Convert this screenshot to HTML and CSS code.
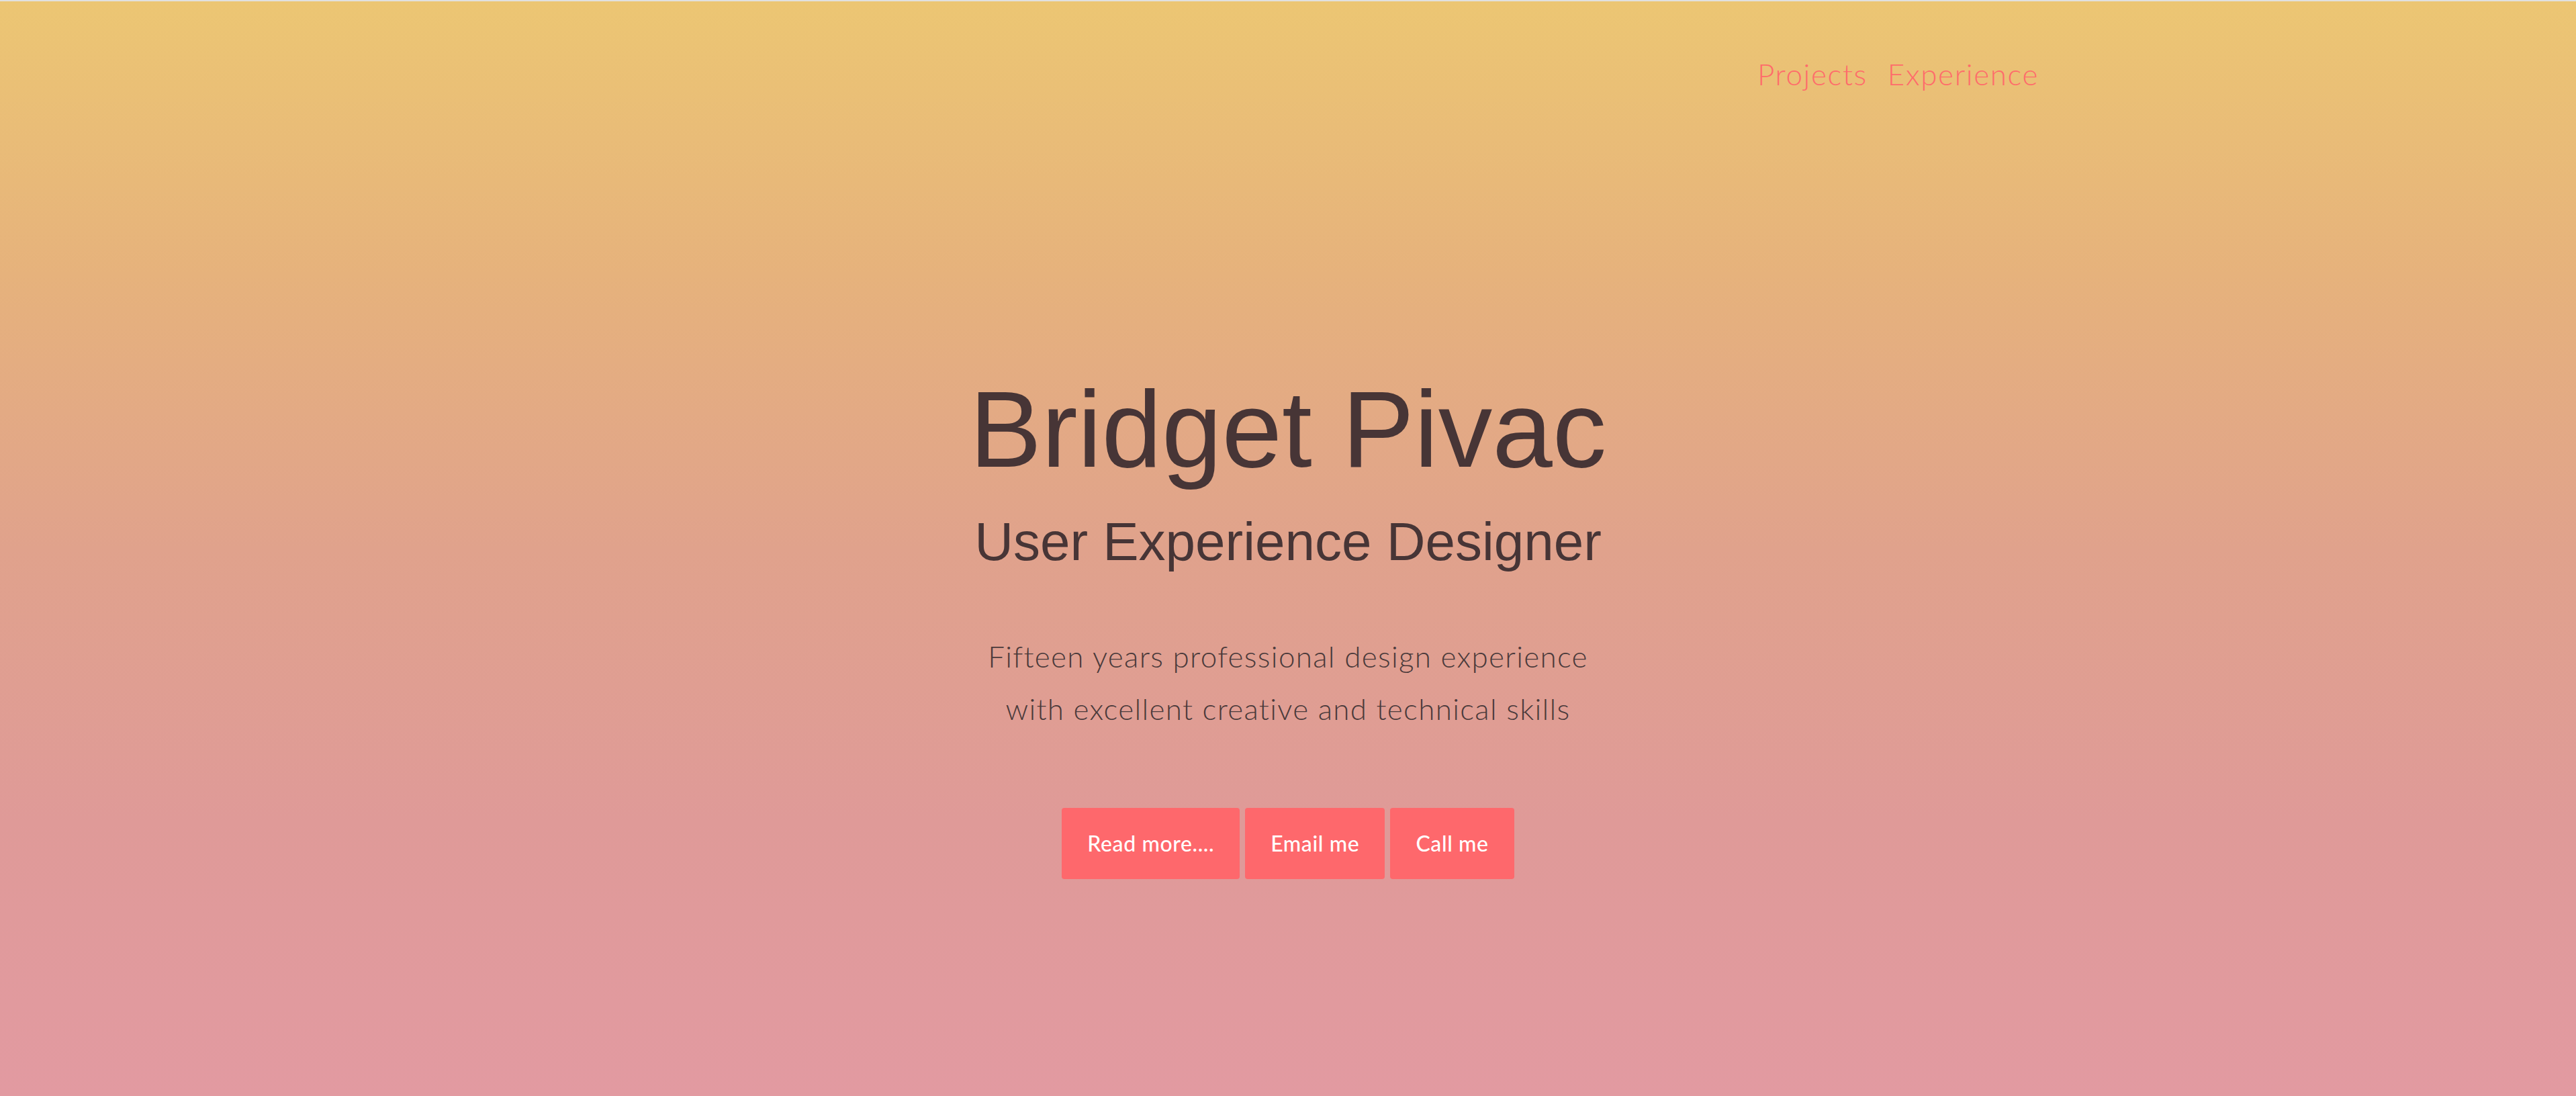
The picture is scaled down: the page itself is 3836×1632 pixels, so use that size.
FILE: index.html
```html
<!DOCTYPE html>
<html lang="en">
<head>
<meta charset="utf-8">
<title>Bridget Pivac</title>
<link rel="stylesheet" href="styles.css">
</head>
<body>
<div class="page">
  <header class="topbar">
    <nav class="nav">
      <a class="nav-link" href="#projects">Projects</a>
      <a class="nav-link" href="#experience">Experience</a>
    </nav>
  </header>
  <main class="hero">
    <h1 class="name">Bridget Pivac</h1>
    <h2 class="role">User Experience Designer</h2>
    <p class="intro">Fifteen years professional design experience<br>with excellent creative and technical skills</p>
    <div class="actions">
      <a class="btn btn-read" href="#more">Read more....</a>
      <a class="btn btn-email" href="#email">Email me</a>
      <a class="btn btn-call" href="#call">Call me</a>
    </div>
  </main>
</div>
</body>
</html>
```
FILE: styles.css
```css
html, body {
  margin: 0;
  padding: 0;
  height: 100%;
}
body {
  font-family: "Lato", "Liberation Sans", sans-serif;
  background: #e29aa0;
}
.page {
  height: 1632px;
  box-sizing: border-box;
  border-top: 2px solid #e1e1df;
  background: linear-gradient(to bottom, #ecc673 0%, #e6b27c 25%, #e0a28c 50%, #df9a98 75%, #e29aa1 100%);
  display: flex;
  flex-direction: column;
}
.topbar {
  width: 2340px;
  margin: 0 auto;
  box-sizing: border-box;
  padding: 78px 52px 0 0;
  display: flex;
  justify-content: flex-end;
}
.nav {
  display: flex;
  gap: 30px;
}
.nav-link {
  font-family: "Lato", sans-serif;
  font-weight: 300;
  font-size: 44px;
  line-height: 60px;
  letter-spacing: 1.6px;
  color: #ff6b6b;
  text-decoration: none;
}
.hero {
  display: flex;
  flex-direction: column;
  align-items: center;
  text-align: center;
  padding-top: 411px;
}
.name {
  margin: 0;
  font-family: "Liberation Sans", Arial, sans-serif;
  font-weight: 400;
  font-size: 161px;
  line-height: 176px;
  color: #473536;
}
.role {
  margin: 36px 0 0;
  font-family: "Liberation Sans", Arial, sans-serif;
  font-weight: 400;
  font-size: 80px;
  line-height: 88px;
  color: #473536;
}
.intro {
  margin: 87px 0 0;
  font-family: "Lato", sans-serif;
  font-weight: 300;
  font-size: 44px;
  line-height: 78px;
  letter-spacing: 1.3px;
  color: #4a3a3b;
}
.actions {
  margin-top: 109px;
  display: flex;
  gap: 8px;
}
.btn {
  display: block;
  height: 106px;
  line-height: 106px;
  padding: 0 38px;
  border-radius: 4px;
  background: #fe686c;
  color: #ffffff;
  font-family: "Lato", sans-serif;
  font-weight: 500;
  font-size: 32px;
  letter-spacing: 0.6px;
  text-decoration: none;
}
```
